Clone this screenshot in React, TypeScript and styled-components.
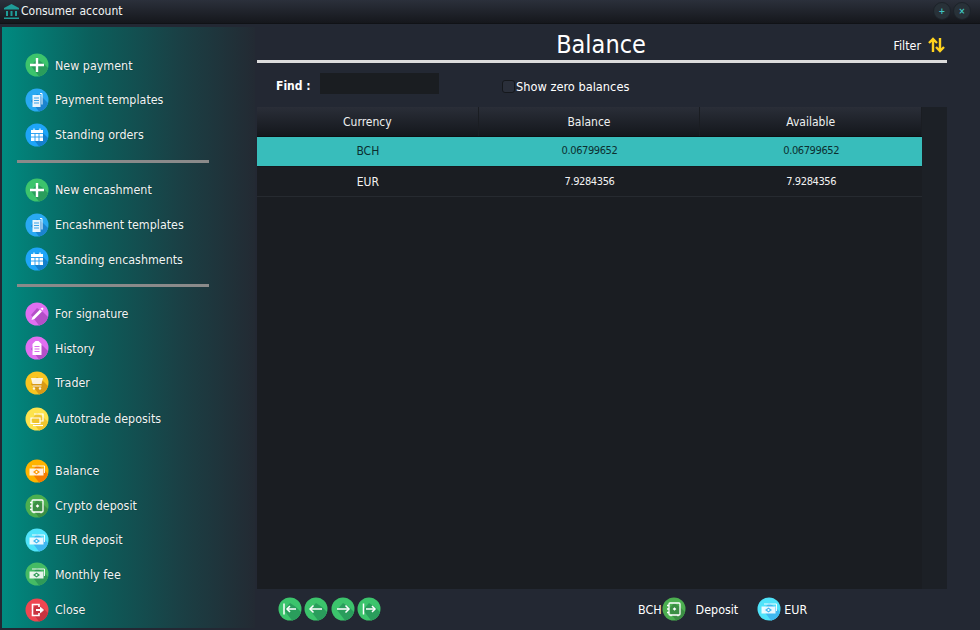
import React, { useId } from "react";
import styled, { createGlobalStyle } from "styled-components";

const Global = createGlobalStyle`
  html, body { margin: 0; padding: 0; background: #232833; }
  * { box-sizing: border-box; }
  #root { width: 980px; height: 630px; overflow: hidden; }
`;
const FONT = `"DejaVu Sans Condensed", "DejaVu Sans", "Noto Sans", sans-serif`;

const Window = styled.div`
  width: 980px; height: 630px; display: flex; flex-direction: column;
  background: #232833; color: #fff; font-family: ${FONT}; font-size: 12.4px; font-stretch: condensed;
`;
const TitleBar = styled.div`
  height: 24px; flex: none; display: flex; align-items: center; padding: 0 9px 1px 3px;
  background: linear-gradient(#2b303b, #15171c); border-bottom: 1px solid #101216;
`;
const TitleText = styled.span`
  margin-left: 1px; font-size: 12px; color: #f2f5f5; flex: 1;
`;
const WinBtn = styled.span`
  width: 18px; height: 18px; margin-left: 2px; border-radius: 50%; display: flex;
  align-items: center; justify-content: center; background: #283138; color: #3fc5c0;
  font-size: 9px; font-weight: 700; line-height: 1; border: 1px solid #1c2229;
`;
const Body = styled.div`
  flex: 1; display: flex; min-height: 0;
`;
const Sidebar = styled.nav`
  width: 253px; margin: 3px 0 2px 2px; padding-top: 21px; display: flex; flex-direction: column;
  background: linear-gradient(90deg, #008a80 0%, #0b5f5c 35%, #1a4045 70%, #232a33 100%);
  flex: none;
`;
const Item = styled.div<{ $h: number }>`
  height: ${(p) => p.$h}px; flex: none; display: flex; align-items: center; gap: 6px;
  padding-left: 23px; font-size: 12.4px; color: #f0f6f6; text-shadow: 0 0 1px #0a2a2a;
`;
const Divider = styled.hr<{ $after: number }>`
  width: 192px; height: 3px; flex: none; border: 0; background: #8a8a8a;
  margin: 8px 0 ${(p) => p.$after}px 15px;
`;
const Spacer = styled.div`
  height: 16px; flex: none;
`;
const Main = styled.main`
  width: 690px; margin-left: 2px; flex: none; display: flex; flex-direction: column;
`;
const Header = styled.header`
  height: 39px; flex: none; position: relative; display: flex; align-items: center;
  justify-content: flex-end; padding: 6px 2px 0 0; border-bottom: 3px solid #dcdcdc;
`;
const Title = styled.h1`
  position: absolute; left: 0; width: 688px; top: 6px; margin: 0; text-align: center;
  font-weight: 400; font-size: 25px; line-height: 30px;
`;
const FilterLabel = styled.span`
  font-size: 12.4px; margin-right: 7px;
`;
const Toolbar = styled.div`
  height: 44px; flex: none; display: flex; align-items: center; padding: 0 0 3px 19px;
`;
const FindLabel = styled.b`
  font-size: 12px; width: 44px; flex: none; margin-top: 4px;
`;
const FindInput = styled.div`
  width: 119px; height: 21px; background: #1a1d21; flex: none;
`;
const Check = styled.span`
  width: 13px; height: 13px; margin: 5px 0 0 63px; border-radius: 3px; background: #2a2f3a;
  border: 1px solid #15181c; flex: none;
`;
const CheckLabel = styled.span`
  margin: 5px 0 0 1px; font-size: 12.7px;
`;
const TableWrap = styled.div`
  flex: 1; min-height: 0; background: #1c2026; display: flex;
`;
const Table = styled.div`
  width: 665px; flex: none; background: #1a1d22; display: flex; flex-direction: column;
`;
const HeadRow = styled.div`
  height: 30px; flex: none; display: grid; grid-template-columns: repeat(3, 1fr);
  background: linear-gradient(#2a2e38, #14171c); border-bottom: 1px solid #0e1013;
`;
const HeadCell = styled.div`
  display: flex; align-items: center; justify-content: center; font-size: 12px;
  color: #eef0f0; border-right: 1px solid #1a1d22;
`;
const Row = styled.div<{ $selected?: boolean }>`
  height: 30px; flex: none; display: grid; grid-template-columns: repeat(3, 1fr);
  align-items: center; text-align: center; font-size: 12px;
  padding-bottom: ${(p) => (p.$selected ? "2px" : "0")};
  background: ${(p) => (p.$selected ? "#38bdbb" : "transparent")};
  color: ${(p) => (p.$selected ? "#0c2f30" : "#f2f2f2")};
  border-bottom: 1px solid ${(p) => (p.$selected ? "#14181c" : "#262a30")};
`;
const Num = styled.span`
  font-size: 11px; letter-spacing: -0.4px;
`;
const Footer = styled.footer`
  height: 41px; flex: none; display: flex; align-items: center; padding: 0 0 1px 21px;
`;
const NavGroup = styled.div`
  display: flex; gap: 2.4px; width: 360px; flex: none;
`;
const FootText = styled.span<{ $gap?: number }>`
  font-size: 12.4px; margin: 0 ${(p) => p.$gap ?? 0}px;
`;
const FootDeposit = styled(FootText)`
  margin: 0 19px 0 10px;
`;

const Disc = ({ color, shadow, size = 24, children }: { color: string; shadow: string; size?: number; children: React.ReactNode }) => {
  const id = useId();
  return (
    <svg width={size} height={size} viewBox="0 0 24 24" style={{ flex: "none" }}>
      <defs><clipPath id={id}><circle cx="12" cy="12" r="11.5" /></clipPath></defs>
      <circle cx="12" cy="12" r="11.5" fill={color} />
      <polygon points="6,13 12,6 18,10 26,18 26,26 16,26" fill={shadow} clipPath={`url(#${id})`} />
      {children}
    </svg>
  );
};

const W = { fill: "none", stroke: "#fff", strokeWidth: 1.6 };
const Plus = () => <path d="M12 5v14M5 12h14" stroke="#fff" strokeWidth="2.4" />;
const Doc = () => (<g><path d="M7.5 7h8v12h-8z" fill="#fff" opacity=".9" /><path d="M15 5.5h2v11" {...W} strokeWidth="1" /><path d="M9 10h5M9 12.5h5M9 15h5" stroke="#3aa3e8" strokeWidth="1" /></g>);
const Cal = () => (<g><path d="M6 7h12v11H6z" fill="#fff" /><path d="M6 10.5h12M10 10.5V18M14 10.5V18M6 14h12" stroke="#1e9bf0" strokeWidth=".9" /><path d="M9 5.5v2M15 5.5v2" stroke="#fff" strokeWidth="1.2" /></g>);
const Pen = () => (<g><path d="M6.5 18l1-3L15 7.5l2 2L9.5 17z" fill="#fff" /><path d="M15.5 6.5l2-1 1 1-1 2" fill="#fff" /></g>);
const Clip = () => (<g><path d="M7.5 8l3-3h3l3 3v11h-9z" fill="#fff" /><path d="M9.5 10.5h5M9.5 13h5M9.5 15.5h5" stroke="#d76bea" strokeWidth="1.1" /></g>);
const Cart = () => (<g opacity=".85"><path d="M6 7h12l-1.5 6h-9z" fill="#fff" /><path d="M7.5 15h9" {...W} strokeWidth="1" /><circle cx="9" cy="17.5" r="1.2" fill="#fff" /><circle cx="15" cy="17.5" r="1.2" fill="#fff" /></g>);
const Auto = () => (<g fill="none" stroke="#fff" strokeWidth="1.2"><path d="M6 11h9v5.5H6z" /><path d="M9 7h9v7h-3" /><path d="M8 18.5h10" /></g>);
const Money = ({ bg }: { bg: string }) => (
  <g>
    <path d="M4.5 9.5h14v7h-14z" fill="#fff" opacity=".88" />
    <path d="M7 7h12.5v7" {...W} strokeWidth=".9" />
    <path d="M8 13l3.5-2.6L15 13l-3.5 2.6z" fill={bg} />
    <circle cx="11.5" cy="13" r="1" fill="#fff" />
  </g>
);
const Safe = () => (<g fill="none" stroke="#fff" strokeWidth="1.3"><rect x="7" y="6" width="11" height="12" rx="1" /><path d="M12.5 10.2l1.8 1.8-1.8 1.8-1.8-1.8z" fill="#fff" stroke="none" /><path d="M5 8.5h2M5 12h2M5 15.5h2M9 18v1.2M16 18v1.2" /></g>);
const Exit = () => (<g fill="none" stroke="#fff" strokeWidth="1.6"><path d="M14 9V6.5H7.5v11H14V15" /><path d="M11 12h6" strokeWidth="2" /><path d="M15.5 9.3l3 2.7-3 2.7z" fill="#fff" strokeWidth="1" /></g>);
const NavFirst = () => (<g stroke="#fff" strokeWidth="1.5" fill="none"><path d="M6 6.5v11" /><path d="M9 12h9" /><path d="M12 9l-3 3 3 3" /></g>);
const NavPrev = () => (<g stroke="#fff" strokeWidth="1.5" fill="none"><path d="M6 12h12" /><path d="M9.5 8.5L6 12l3.5 3.5" /></g>);
const NavNext = () => (<g stroke="#fff" strokeWidth="1.5" fill="none"><path d="M6 12h12" /><path d="M14.5 8.5L18 12l-3.5 3.5" /></g>);
const NavLast = () => (<g stroke="#fff" strokeWidth="1.5" fill="none"><path d="M6.5 6.5v11" /><path d="M9 12h9" /><path d="M15 9l3 3-3 3" /></g>);

const C = {
  green: ["#3cc46c", "#2a9d5c"], blue: ["#29a9f2", "#1b84cf"], sky: ["#1ea5f8", "#1580cd"],
  violet: ["#df6ff0", "#b44fc8"], amber: ["#f8c521", "#d99a16"], yellow: ["#fde34d", "#f0c52e"],
  orange: ["#ffb300", "#f57c00"], safe: ["#4caf50", "#3c8f44"], cyan: ["#4fe3fa", "#3fb8f0"],
  fee: ["#45bb64", "#2f9a58"], red: ["#ee4650", "#c93440"],
};

type MenuItem = { label: string; h: number; c: string[]; g: React.ReactNode };
const ico = (c: string[], g: React.ReactNode) => <Disc color={c[0]} shadow={c[1]}>{g}</Disc>;

const group1: MenuItem[] = [
  { label: "New payment", h: 34, c: C.green, g: <Plus /> },
  { label: "Payment templates", h: 35, c: C.blue, g: <Doc /> },
  { label: "Standing orders", h: 35, c: C.sky, g: <Cal /> },
];
const group2: MenuItem[] = [
  { label: "New encashment", h: 35, c: C.green, g: <Plus /> },
  { label: "Encashment templates", h: 35, c: C.blue, g: <Doc /> },
  { label: "Standing encashments", h: 34, c: C.sky, g: <Cal /> },
];
const group3: MenuItem[] = [
  { label: "For signature", h: 35, c: C.violet, g: <Pen /> },
  { label: "History", h: 34, c: C.violet, g: <Clip /> },
  { label: "Trader", h: 35, c: C.amber, g: <Cart /> },
  { label: "Autotrade deposits", h: 37, c: C.yellow, g: <Auto /> },
];
const group4: MenuItem[] = [
  { label: "Balance", h: 35, c: C.orange, g: <Money bg="#ff9800" /> },
  { label: "Crypto deposit", h: 35, c: C.safe, g: <Safe /> },
  { label: "EUR deposit", h: 33, c: C.cyan, g: <Money bg="#3fb8f0" /> },
  { label: "Monthly fee", h: 36, c: C.fee, g: <Money bg="#2f9a58" /> },
  { label: "Close", h: 35, c: C.red, g: <Exit /> },
];

const Menu = ({ items }: { items: MenuItem[] }) => (
  <>{items.map((i) => <Item key={i.label} $h={i.h}>{ico(i.c, i.g)}<span>{i.label}</span></Item>)}</>
);

export default function App() {
  return (
    <Window>
      <Global />
      <TitleBar>
        <svg width="17" height="17" viewBox="0 0 17 17" fill="#1f9c98">
          <path d="M8.5 1L16 5v1.5H1V5z" /><path d="M3 8h2v5H3zM7.5 8h2v5h-2zM12 8h2v5h-2zM1 14.5h15V16H1z" />
        </svg>
        <TitleText>Consumer account</TitleText>
        <WinBtn>+</WinBtn>
        <WinBtn>×</WinBtn>
      </TitleBar>
      <Body>
        <Sidebar>
          <Menu items={group1} />
          <Divider $after={9} />
          <Menu items={group2} />
          <Divider $after={9} />
          <Menu items={group3} />
          <Spacer />
          <Menu items={group4} />
        </Sidebar>
        <Main>
          <Header>
            <Title>Balance</Title>
            <FilterLabel>Filter</FilterLabel>
            <svg width="17" height="16" viewBox="0 0 17 16" fill="none" stroke="#ffd21e" strokeWidth="2.4">
              <path d="M5 15V2M1 6l4-4 4 4" /><path d="M12 1v13M8 10l4 4 4-4" />
            </svg>
          </Header>
          <Toolbar>
            <FindLabel>Find :</FindLabel>
            <FindInput />
            <Check />
            <CheckLabel>Show zero balances</CheckLabel>
          </Toolbar>
          <TableWrap>
            <Table>
              <HeadRow>
                <HeadCell>Currency</HeadCell><HeadCell>Balance</HeadCell><HeadCell>Available</HeadCell>
              </HeadRow>
              <Row $selected><span>BCH</span><Num>0.06799652</Num><Num>0.06799652</Num></Row>
              <Row><span>EUR</span><Num>7.9284356</Num><Num>7.9284356</Num></Row>
            </Table>
          </TableWrap>
          <Footer>
            <NavGroup>
              <Disc color={C.green[0]} shadow={C.green[1]}><NavFirst /></Disc>
              <Disc color={C.green[0]} shadow={C.green[1]}><NavPrev /></Disc>
              <Disc color={C.green[0]} shadow={C.green[1]}><NavNext /></Disc>
              <Disc color={C.green[0]} shadow={C.green[1]}><NavLast /></Disc>
            </NavGroup>
            <FootText>BCH</FootText>
            <Disc color={C.safe[0]} shadow={C.safe[1]}><Safe /></Disc>
            <FootDeposit>Deposit</FootDeposit>
            <Disc color={C.cyan[0]} shadow={C.cyan[1]}><Money bg="#3fb8f0" /></Disc>
            <FootText $gap={3}>EUR</FootText>
          </Footer>
        </Main>
      </Body>
    </Window>
  );
}
